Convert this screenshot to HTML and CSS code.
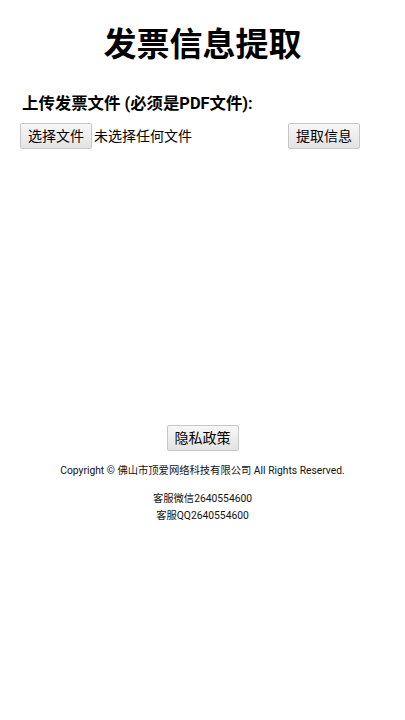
FILE: index.html
```html
<!DOCTYPE html>
<html lang="zh-CN">
<head>
<meta charset="utf-8">
<meta name="viewport" content="width=device-width, initial-scale=1">
<title>发票信息提取</title>
<link rel="stylesheet" href="styles.css">
</head>
<body>
<h1 class="title">发票信息提取</h1>
<section class="upload">
  <label class="upload-label">上传发票文件 (必须是PDF文件):</label>
  <div class="upload-row">
    <div class="file-picker">
      <button class="btn" type="button">选择文件</button>
      <span class="file-name">未选择任何文件</span>
    </div>
    <button class="btn" type="button">提取信息</button>
  </div>
</section>
<footer class="footer">
  <button class="btn btn-privacy" type="button">隐私政策</button>
  <p class="copyright">Copyright © 佛山市顶爱网络科技有限公司 All Rights Reserved.</p>
  <p class="contact">客服微信2640554600<br>客服QQ2640554600</p>
</footer>
</body>
</html>
```
FILE: styles.css
```css
html, body {
  margin: 0;
  padding: 0;
  background: #ffffff;
}
body {
  font-family: Roboto, "Noto Sans CJK SC", sans-serif;
  color: #000;
}
.title {
  margin: 0;
  padding-top: 25px;
  font-size: 33px;
  line-height: 40px;
  font-weight: 700;
  text-align: center;
}
.upload {
  padding: 0 45px 0 20px;
  margin-top: 27px;
}
.upload-label {
  display: block;
  padding-left: 2px;
  font-size: 16.4px;
  line-height: 24px;
  font-weight: 700;
}
.upload-row {
  margin-top: 7px;
  display: flex;
  justify-content: space-between;
  align-items: center;
}
.file-picker {
  display: flex;
  align-items: center;
  gap: 2px;
}
.file-name {
  font-size: 14px;
  line-height: 20px;
}
.btn {
  font-family: Roboto, "Noto Sans CJK SC", sans-serif;
  font-size: 14px;
  line-height: 22px;
  height: 26px;
  padding: 1px 7px;
  margin: 0;
  color: #000;
  border: 1px solid #c6c6c6;
  border-radius: 2px;
  background: linear-gradient(#f7f7f7, #e3e3e3);
  box-sizing: border-box;
}
.footer {
  margin-top: 276px;
  display: flex;
  flex-direction: column;
  align-items: center;
}
.copyright {
  margin: 13px 0 0;
  font-size: 10.3px;
  line-height: 14px;
  color: #111;
}
.contact {
  margin: 12px 0 0;
  font-size: 10.3px;
  line-height: 17px;
  text-align: center;
  color: #111;
}
```
